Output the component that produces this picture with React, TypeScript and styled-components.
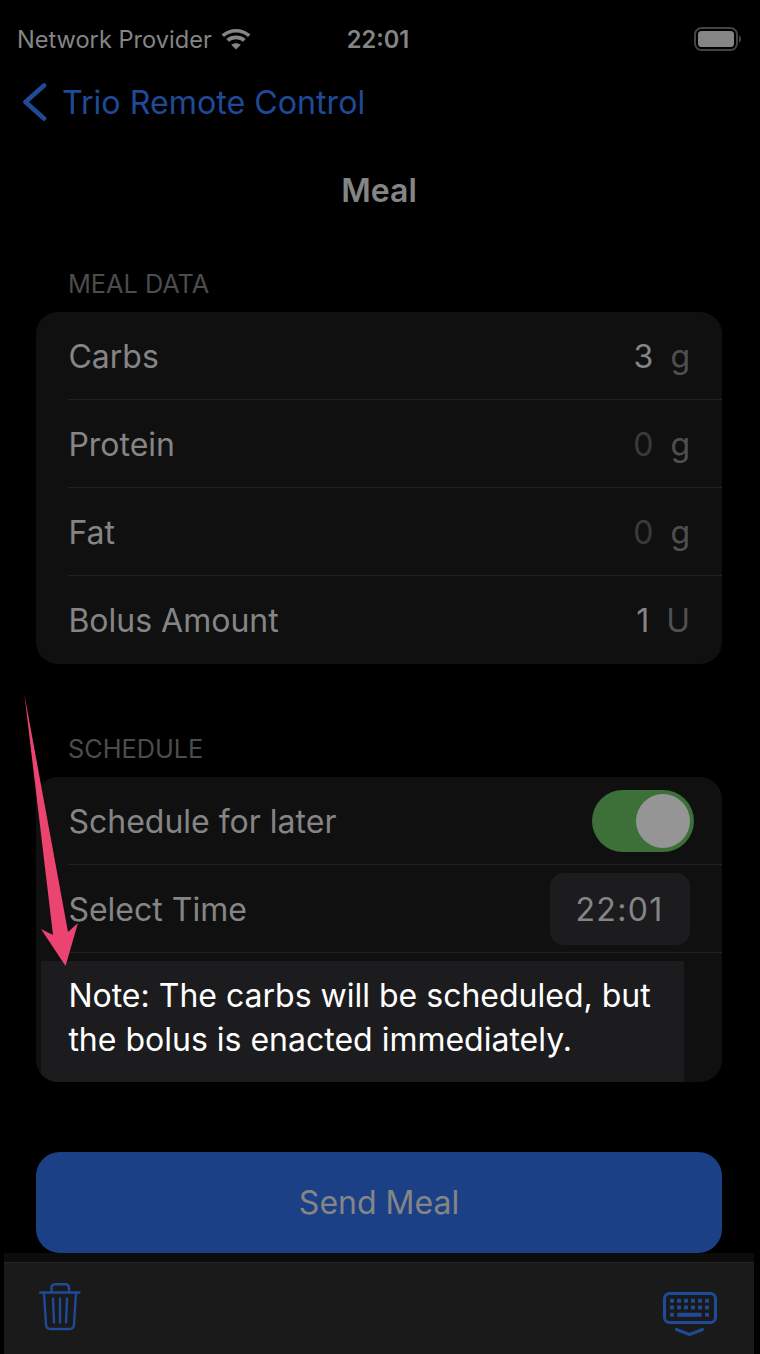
import React from 'react';
import styled, { createGlobalStyle } from 'styled-components';

const GlobalStyle = createGlobalStyle`
  html, body {
    margin: 0;
    padding: 0;
    background: #000;
  }
  body {
    font-family: Inter, "Liberation Sans", sans-serif;
  }
`;

const Screen = styled.div`
  position: relative;
  width: 760px;
  height: 1354px;
  overflow: hidden;
  background: #000;
  display: flex;
  flex-direction: column;
`;

const StatusBar = styled.div`
  height: 78px;
  box-sizing: border-box;
  padding: 0 19px 0 17px;
  display: grid;
  grid-template-columns: 1fr auto 1fr;
  align-items: center;
  color: #858585;
  font-size: 23.6px;
`;

const Carrier = styled.div`
  display: flex;
  align-items: center;
  gap: 9px;
`;

const Clock = styled.div`
  font-weight: 600;
  margin-left: -2px;
`;

const BatteryWrap = styled.div`
  display: flex;
  justify-content: flex-end;
`;

const NavBar = styled.div`
  height: 48px;
  margin-bottom: 2px;
  display: flex;
  align-items: center;
  gap: 15px;
  padding-left: 22px;
  color: #1f4a97;
  font-size: 32.2px;
`;

const Title = styled.div`
  margin-top: 38px;
  height: 50px;
  line-height: 50px;
  padding-right: 2px;
  text-align: center;
  color: #858585;
  font-size: 32px;
  font-weight: 600;
`;

const SectionHeader = styled.div<{ $top: number }>`
  margin-top: ${(p) => p.$top}px;
  padding-left: 68px;
  height: 30px;
  line-height: 30px;
  color: #4c4c4e;
  font-size: 25.3px;
`;

const Card = styled.div`
  margin: 13px 38px 0 36px;
  background: #101011;
  border-radius: 22px;
  overflow: hidden;
`;

const Row = styled.div<{ $divider?: boolean }>`
  height: 88px;
  box-sizing: border-box;
  margin-left: 32px;
  padding-right: 32px;
  display: flex;
  align-items: center;
  justify-content: space-between;
  color: #858585;
  font-size: 32px;
  border-bottom: ${(p) => (p.$divider ? '1px solid #232324' : 'none')};
`;

const RowLabel = styled.span`
  margin: 1px 0 0 0.4px;
`;

const ValueGroup = styled.div`
  display: flex;
  align-items: center;
  gap: 17px;
  margin-top: 1px;
`;

const Amount = styled.span<{ $empty?: boolean }>`
  color: ${(p) => (p.$empty ? '#3a3a3c' : '#858585')};
`;

const Unit = styled.span`
  color: #4f4f51;
`;

const Switch = styled.div`
  width: 102px;
  height: 62px;
  margin-right: -4px;
  box-sizing: border-box;
  padding: 4px;
  border-radius: 31px;
  background: #3c7038;
  display: flex;
  justify-content: flex-end;
`;

const Knob = styled.div`
  width: 54px;
  height: 54px;
  border-radius: 50%;
  background: #959595;
`;

const TimeChip = styled.div`
  width: 140px;
  height: 72px;
  border-radius: 14px;
  background: #1c1c1e;
  display: flex;
  align-items: center;
  justify-content: center;
  padding: 2px 1px 0 0;
  box-sizing: border-box;
  letter-spacing: 1.3px;
`;

const Note = styled.div`
  margin: 8px 38px 0 5px;
  height: 121px;
  box-sizing: border-box;
  padding: 13px 0 0 27.4px;
  background: #1c1c1e;
  color: #fff;
  font-size: 32px;
  line-height: 44px;
  white-space: nowrap;
`;

const SendButton = styled.div`
  margin: 70px 38px 0 36px;
  height: 101px;
  border-radius: 24px;
  background: #1c4086;
  color: #858585;
  font-size: 32px;
  display: flex;
  align-items: center;
  justify-content: center;
`;

const Toolbar = styled.div`
  margin: 0 6px 0 4px;
  flex: 1;
  display: flex;
  flex-direction: column;
  background: #1a1a1a;
`;

const ToolbarStrip = styled.div`
  height: 9px;
  background: #0c0c0c;
  border-bottom: 1px solid #232323;
`;

const ToolbarIcons = styled.div`
  flex: 1;
  display: flex;
  justify-content: space-between;
  padding: 20px 37px 0 35px;
`;

const TrashIcon = styled.svg`
  width: 42px;
  height: 48px;
`;

const KeyboardIcon = styled.svg`
  width: 54px;
  height: 48px;
  margin-top: 7px;
`;

const ArrowOverlay = styled.svg`
  position: absolute;
  left: 0;
  top: 680px;
  width: 100px;
  height: 320px;
`;

const WifiIcon = () => (
  <svg width="30" height="22" viewBox="0 0 30 22" fill="none" stroke="#858585" strokeWidth="3.6">
    <path d="M1.8 7.8 C9 1 21 1 28.2 7.8" />
    <path d="M6.6 12.4 C11 8.4 19 8.4 23.4 12.4" />
    <path d="M15 21.5 L10.2 16.8 C13 14.6 17 14.6 19.8 16.8 Z" fill="#858585" stroke="none" />
  </svg>
);

const BatteryIcon = () => (
  <svg width="47" height="24" viewBox="0 0 47 24" fill="none">
    <rect x="1" y="1" width="42" height="22" rx="6.5" stroke="#444" strokeWidth="2" />
    <rect x="4" y="4" width="36" height="16" rx="3.5" fill="#858585" />
    <path d="M45 8.5 C46.5 9 47 10.5 47 12 C47 13.5 46.5 15 45 15.5 Z" fill="#444" />
  </svg>
);

const BackChevron = () => (
  <svg width="25" height="38" viewBox="0 0 25 38" fill="none" stroke="#1f4a97" strokeWidth="4.6" strokeLinecap="round" strokeLinejoin="round">
    <path d="M22 2.5 L3.5 19 L22 35.5" />
  </svg>
);

type MealRow = { label: string; amount: string; unit: string; empty?: boolean };

const mealRows: MealRow[] = [
  { label: 'Carbs', amount: '3', unit: 'g' },
  { label: 'Protein', amount: '0', unit: 'g', empty: true },
  { label: 'Fat', amount: '0', unit: 'g', empty: true },
  { label: 'Bolus Amount', amount: '1', unit: 'U' },
];

export default function App() {
  return (
    <>
      <GlobalStyle />
      <Screen>
        <StatusBar>
          <Carrier>
            Network Provider
            <WifiIcon />
          </Carrier>
          <Clock>22:01</Clock>
          <BatteryWrap>
            <BatteryIcon />
          </BatteryWrap>
        </StatusBar>

        <NavBar>
          <BackChevron />
          Trio Remote Control
        </NavBar>

        <Title>Meal</Title>

        <SectionHeader $top={53}>MEAL DATA</SectionHeader>
        <Card>
          {mealRows.map((row, i) => (
            <Row key={row.label} $divider={i < mealRows.length - 1}>
              <RowLabel>{row.label}</RowLabel>
              <ValueGroup>
                <Amount $empty={row.empty}>{row.amount}</Amount>
                <Unit>{row.unit}</Unit>
              </ValueGroup>
            </Row>
          ))}
        </Card>

        <SectionHeader $top={70}>SCHEDULE</SectionHeader>
        <Card>
          <Row $divider>
            <RowLabel>Schedule for later</RowLabel>
            <Switch>
              <Knob />
            </Switch>
          </Row>
          <Row $divider>
            <RowLabel>Select Time</RowLabel>
            <TimeChip>22:01</TimeChip>
          </Row>
          <Note>
            Note: The carbs will be scheduled, but
            <br />
            the bolus is enacted immediately.
          </Note>
        </Card>

        <SendButton>Send Meal</SendButton>

        <Toolbar>
          <ToolbarStrip />
          <ToolbarIcons>
            <TrashIcon viewBox="0 0 42 48" fill="none" stroke="#1f4a97" strokeWidth="2.4" strokeLinecap="round" strokeLinejoin="round">
              <path d="M1 9.5 H40.5" />
              <path d="M12.5 9.5 V5 C12.5 2.5 14 1.2 16.5 1.2 H26 C28.5 1.2 30 2.5 30 5 V9.5" />
              <path d="M5 9.5 L7 41.5 C7.2 44.5 9 46 11.5 46 H30.5 C33 46 34.8 44.5 35 41.5 L37 9.5" />
              <path d="M14 15.5 L15 39.5 M21 15.5 V39.5 M28 15.5 L27 39.5" />
            </TrashIcon>
            <KeyboardIcon viewBox="0 0 54 48" fill="none" stroke="#1f4a97">
              <rect x="1.5" y="3.5" width="51" height="29" rx="5" strokeWidth="3" />
              <g fill="#1f4a97" stroke="none">
                {[7, 14, 21, 28, 35, 42].map((x) => (
                  <React.Fragment key={x}>
                    <rect x={x} y="8.7" width="4" height="4" rx="0.8" />
                    <rect x={x} y="15.4" width="4" height="4" rx="0.8" />
                  </React.Fragment>
                ))}
                <rect x="7" y="22.7" width="4" height="4" rx="0.8" />
                <rect x="14.3" y="22.7" width="24.4" height="4" rx="0.8" />
                <rect x="42" y="22.7" width="4" height="4" rx="0.8" />
              </g>
              <path d="M13.5 39.5 L26.5 44.5 L39.5 39.5" strokeWidth="3" strokeLinecap="round" strokeLinejoin="round" />
            </KeyboardIcon>
          </ToolbarIcons>
        </Toolbar>

        <ArrowOverlay viewBox="0 0 100 320">
          <path d="M24.5 15 L68 252 L78 243 L65.5 286 L41 249 L53 255 Z" fill="#ec4470" />
        </ArrowOverlay>
      </Screen>
    </>
  );
}
